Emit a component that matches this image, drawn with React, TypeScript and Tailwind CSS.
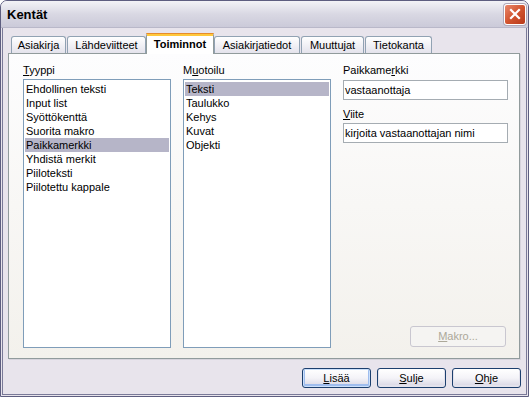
import React from "react";

type Tab = { label: string; w: string; ml: string; active?: boolean };

const TABS: Tab[] = [
  { label: "Asiakirja", w: "w-[55px]", ml: "ml-0" },
  { label: "Lähdeviitteet", w: "w-[79px]", ml: "ml-[1px]" },
  { label: "Toiminnot", w: "w-[68px]", ml: "ml-0", active: true },
  { label: "Asiakirjatiedot", w: "w-[86px]", ml: "ml-0" },
  { label: "Muuttujat", w: "w-[63px]", ml: "ml-[1px]" },
  { label: "Tietokanta", w: "w-[67px]", ml: "ml-[1px]" },
];

const TYPES = [
  "Ehdollinen teksti",
  "Input list",
  "Syöttökenttä",
  "Suorita makro",
  "Paikkamerkki",
  "Yhdistä merkit",
  "Piiloteksti",
  "Piilotettu kappale",
];

const FORMATS = ["Teksti", "Taulukko", "Kehys", "Kuvat", "Objekti"];

function ListBox({ items, selected }: { items: string[]; selected: string }) {
  return (
    <div className="flex-1 bg-white border border-[#7f9db9] pt-[2px] px-[1px]">
      {items.map(it => (
        <div
          key={it}
          className={`h-[14px] leading-[14px] pl-[1px] whitespace-nowrap ${it === selected ? "bg-[#b6b5c8]" : ""}`}
        >
          {it}
        </div>
      ))}
    </div>
  );
}

function Button({ first, rest, primary }: { first: string; rest: string; primary?: boolean }) {
  return (
    <button
      className={`w-[69px] h-[20px] rounded-[3px] border border-[#1c3f6e] bg-gradient-to-b from-white via-[#f4f3f8] to-[#d6d4e2] text-[11px] leading-none text-black ${
        primary ? "shadow-[inset_0_0_0_1px_#cbe0fb,inset_0_-1px_0_2px_#9fbdee]" : "shadow-[inset_0_-1px_0_1px_#e3e2ec]"
      }`}
    >
      <u>{first}</u>
      {rest}
    </button>
  );
}

export default function App() {
  return (
    <div className="w-[529px] h-[397px] flex flex-col bg-[#e8e4ec] border border-[#5e5e80] rounded-t-[7px] overflow-hidden font-['Liberation_Sans',Arial,sans-serif] text-[11px] text-black">
      {/* Title bar */}
      <div className="h-[27px] flex items-center pl-[6px] pr-[2px] bg-gradient-to-b from-[#f3f3f7] via-[#d9d8e3] to-[#cbcad9] border-b border-[#b9b8c9]">
        <span className="flex-1 text-[13px] font-bold leading-none">Kentät</span>
        <div className="w-[22px] h-[21px] rounded-[3px] border border-white bg-gradient-to-br from-[#e8876a] via-[#d2542f] to-[#b8391a] flex items-center justify-center shadow-[0_0_0_1px_#b0a8b8]">
          <svg width="12" height="12" viewBox="0 0 12 12">
            <path d="M2 2 L10 10 M10 2 L2 10" stroke="white" strokeWidth="2.2" strokeLinecap="square" />
          </svg>
        </div>
      </div>

      {/* Body */}
      <div className="flex-1 flex flex-col ml-[1px] mr-[1px] mb-[1px] border-x border-b border-[#7a7a98] px-[5px]">
        {/* Tabs */}
        <div className="h-[20px] mt-[5px] flex items-end pl-[3px]">
          {TABS.map(t =>
            t.active ? (
              <div
                key={t.label}
                className={`${t.w} ${t.ml} h-[21px] -mb-px relative z-10 bg-white border-x border-[#919b9c] rounded-t-[3px] flex flex-col`}
              >
                <div className="h-[1px] bg-[#e68b2c] rounded-t-[3px] -mx-px" />
                <div className="h-[2px] bg-[#ffc83c]" />
                <div className="flex-1 flex items-center justify-center font-bold leading-none pb-[2px]">{t.label}</div>
              </div>
            ) : (
              <div
                key={t.label}
                className={`${t.w} ${t.ml} h-[17px] border-t border-x border-[#91a2b3] rounded-t-[3px] bg-gradient-to-b from-white to-[#e4e3ec] flex items-center justify-center leading-none pt-[1px]`}
              >
                {t.label}
              </div>
            )
          )}
        </div>

        {/* Tab pane */}
        <div className="h-[306px] mr-[1px] border border-[#919b9c] bg-gradient-to-b from-[#fdfdfe] to-[#f3f1ec] flex gap-[12px] pl-[14px] pr-[11px] pt-[9px] pb-[10px] shadow-[1px_1px_0_#d6d3dc]">
          <div className="w-[148px] flex flex-col">
            <div className="h-[14px] leading-[14px] mb-[2px]">
              <u>T</u>yyppi
            </div>
            <ListBox items={TYPES} selected="Paikkamerkki" />
          </div>
          <div className="w-[148px] flex flex-col">
            <div className="h-[14px] leading-[14px] mb-[2px]">
              M<u>u</u>otoilu
            </div>
            <ListBox items={FORMATS} selected="Teksti" />
          </div>
          <div className="flex-1 flex flex-col">
            <div className="h-[14px] leading-[14px] mb-[3px]">
              Paikkame<u>r</u>kki
            </div>
            <div className="h-[20px] bg-white border border-[#a5acb2] flex items-center pl-[1px] leading-none">vastaanottaja</div>
            <div className="h-[14px] leading-[14px] mt-[7px] mb-[2px]">
              <u>V</u>iite
            </div>
            <div className="h-[20px] bg-white border border-[#a5acb2] flex items-center pl-[1px] leading-none">
              kirjoita vastaanottajan nimi
            </div>
            <button className="mt-auto mb-px mr-[2px] self-end w-[96px] h-[21px] rounded-[3px] border border-[#c9c7d0] bg-[#f5f4f2] text-[#aca899] leading-none">
              <u>M</u>akro...
            </button>
          </div>
        </div>

        {/* Bottom buttons */}
        <div className="mt-[9px] flex justify-end gap-[6px]">
          <Button first="L" rest="isää" primary />
          <Button first="S" rest="ulje" />
          <Button first="O" rest="hje" />
        </div>
      </div>
    </div>
  );
}
